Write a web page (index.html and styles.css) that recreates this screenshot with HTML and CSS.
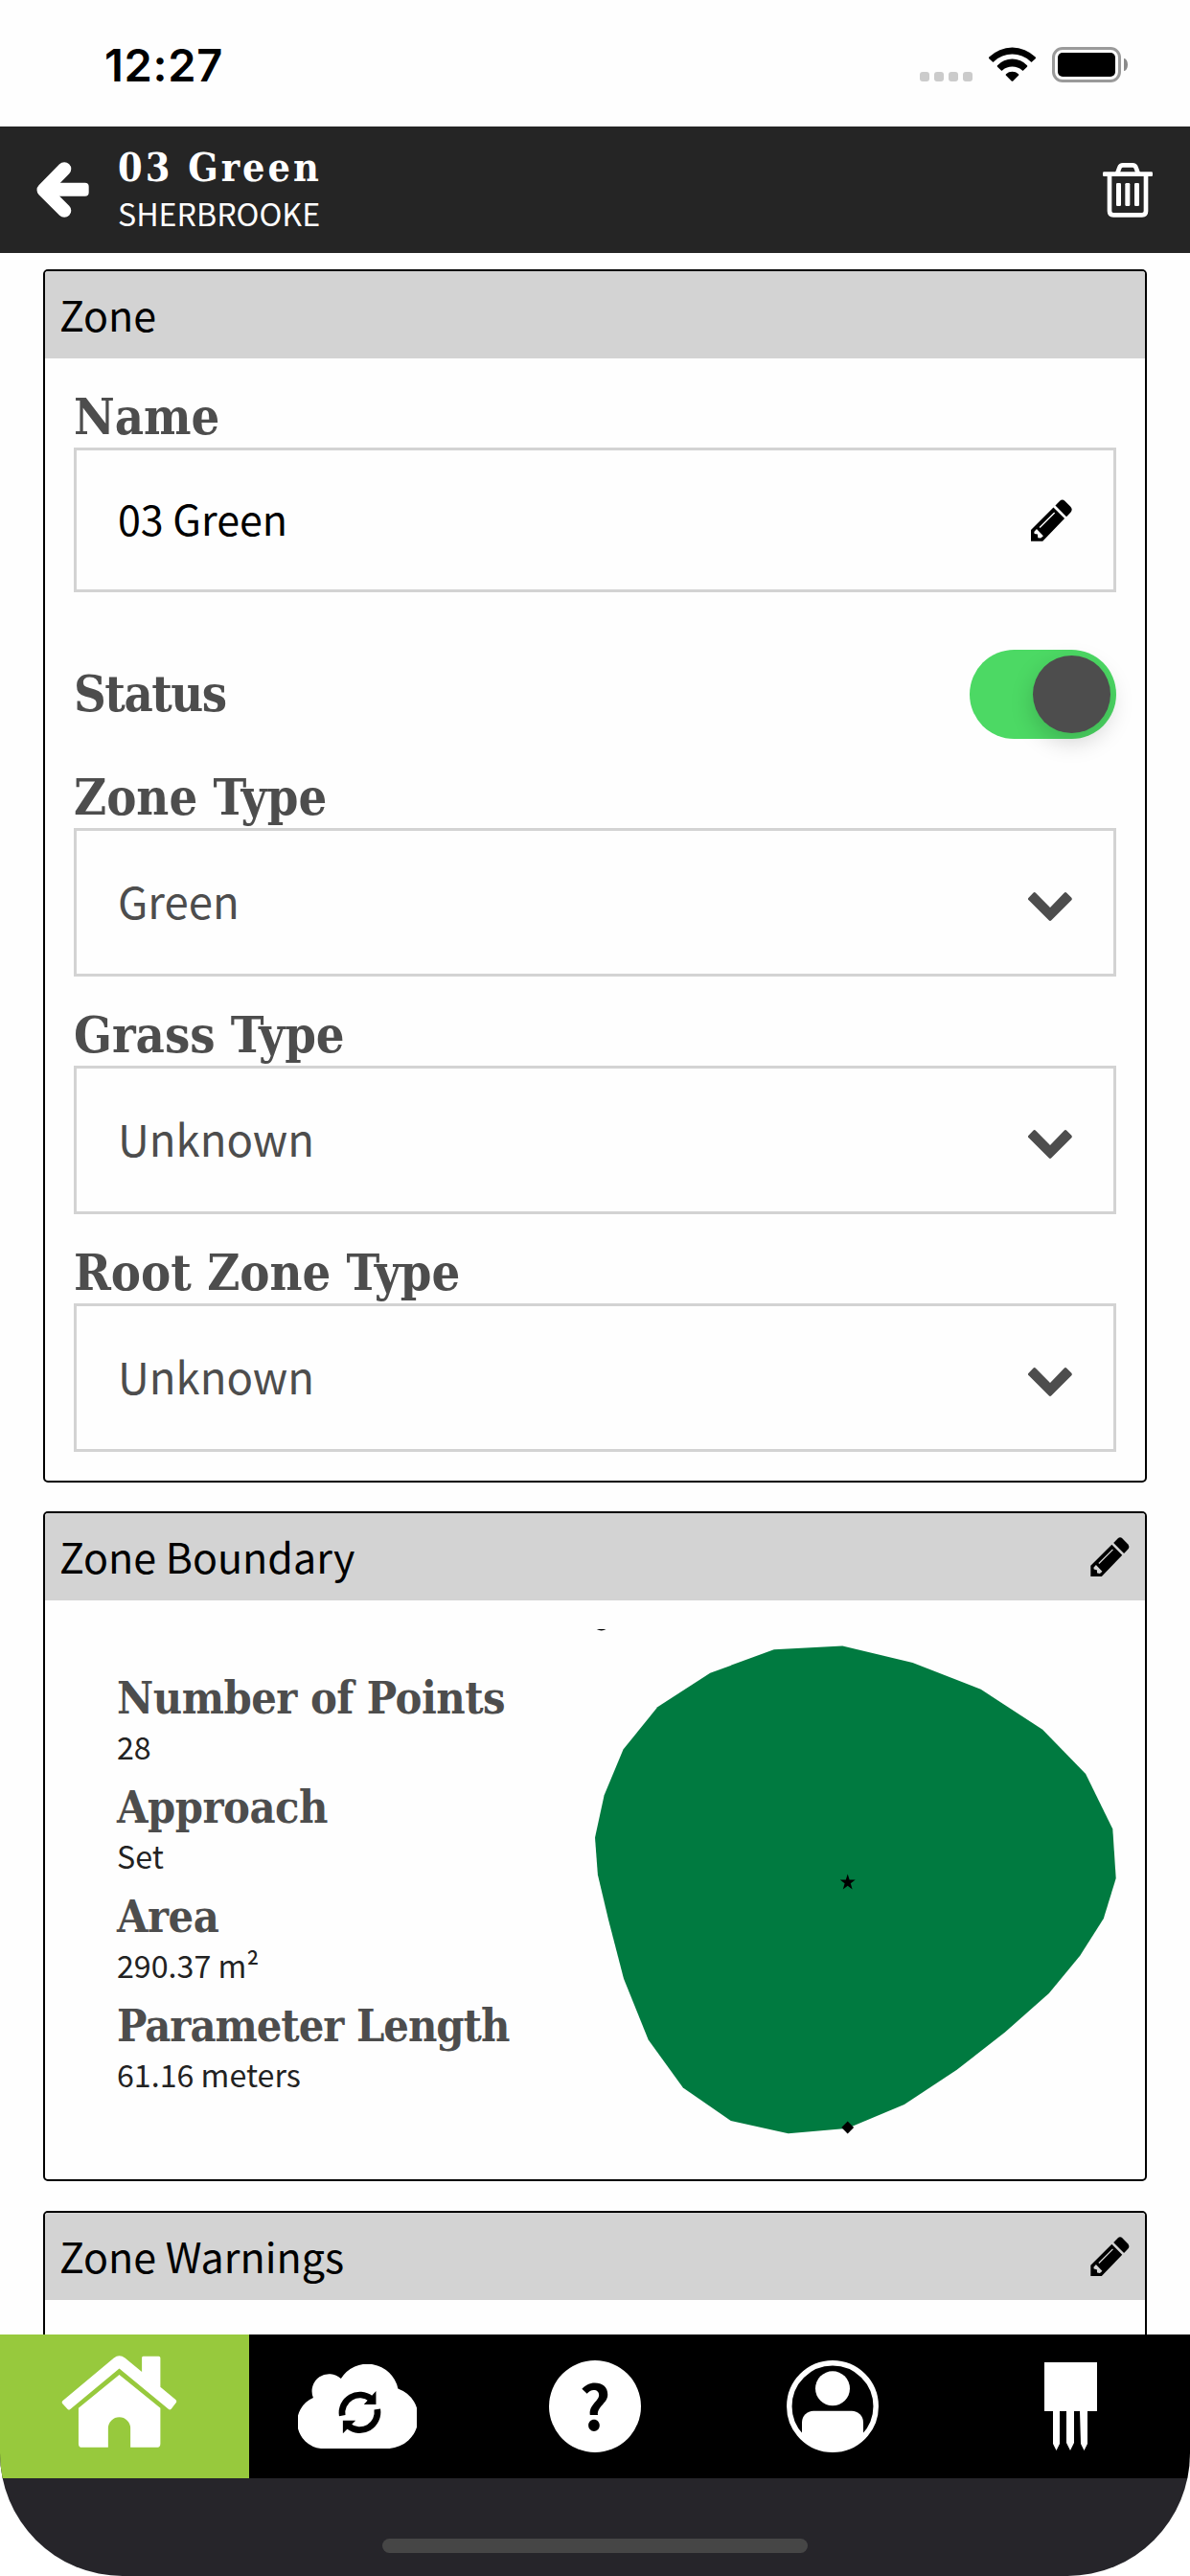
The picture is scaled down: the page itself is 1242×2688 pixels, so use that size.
FILE: index.html
```html
<!DOCTYPE html>
<html lang="en">

<head>
  <meta charset="UTF-8" />
  <meta name="viewport" content="width=device-width, initial-scale=1.0" />
  <title>Zone - 03 Green</title>
  <link rel="stylesheet" href="styles.css">
</head>

<body>
  <!-- shared icons -->
  <svg class="sprite" width="0" height="0">
    <symbol id="pencil" viewBox="528 422 130 132">
      <path fill-rule="evenodd" d="M528 518L599 447L634 482L565 554H528zM538 524L539 530L549 532L550 543L559 544L567 537L546 515zM554 509L557 512L604 465L601 462z" />
      <path d="M605 441L619 427Q627 419 635 427L653 445Q661 454 653 463L640 477z" />
    </symbol>
    <symbol id="chevron" viewBox="515 153 138 90">
      <path d="M516 171L531 155Q535 151 539 155L584 201L628 155Q632 151 636 155L651 170Q654 174 651 178L588 241Q584 245 580 241L517 178Q513 174 516 171z" />
    </symbol>
  </svg>

  <div class="app">
    <div class="status-bar">
      <span class="time">12:27</span>
      <div class="indicators">
        <div class="signal"><i></i><i></i><i></i><i></i></div>
        <svg class="wifi" viewBox="396 148 147 107">
          <path d="M397 184Q395 181 397 179A103 103 0 0 1 542 179Q544 181 542 184L532 193Q529 196 527 193A84 84 0 0 0 412 193Q410 196 407 193z" />
          <path d="M423 210Q421 207 423 205A64 64 0 0 1 516 205Q518 207 516 210L505 220Q502 223 500 220A47 47 0 0 0 439 220Q437 223 434 220z" />
          <path d="M450 237Q448 235 450 232A31 31 0 0 1 489 232Q491 235 489 237L472 254Q469.500 256 467 254z" />
        </svg>
        <div class="battery"><span></span></div>
        <div class="battery-tip"></div>
      </div>
    </div>

    <header class="header">
      <svg class="back" viewBox="115 506 164 175">
        <path d="M202 528L137 594L202 659" />
        <rect x="150" y="572" width="129" height="42" rx="12" />
      </svg>
      <div class="heading">
        <h1>03 Green</h1>
        <p>SHERBROOKE</p>
      </div>
      <svg class="trash" viewBox="753 510 156 171">
        <path d="M798 544L805 525Q808 517 816 517H846Q854 517 857 525L864 544M774 545V661Q774 673 786 673H876Q888 673 888 661V545" />
        <rect x="753" y="538" width="156" height="14" rx="4" />
        <rect x="795" y="573" width="15" height="72" rx="4" />
        <rect x="823" y="573" width="15" height="72" rx="4" />
        <rect x="852" y="573" width="15" height="72" rx="4" />
      </svg>
    </header>

    <main class="content">
      <section class="card">
        <div class="card-header">
          <h2>Zone</h2>
        </div>
        <div class="card-body">
          <div class="label">Name</div>
          <div class="input">
            <span>03 Green</span>
            <svg class="pencil"><use href="#pencil" /></svg>
          </div>
          <div class="status-row">
            <div class="label">Status</div>
            <div class="toggle"><span class="knob"></span></div>
          </div>
          <div class="label">Zone Type</div>
          <div class="select">
            <span>Green</span>
            <svg class="chevron"><use href="#chevron" /></svg>
          </div>
          <div class="label">Grass Type</div>
          <div class="select">
            <span>Unknown</span>
            <svg class="chevron"><use href="#chevron" /></svg>
          </div>
          <div class="label">Root Zone Type</div>
          <div class="select">
            <span>Unknown</span>
            <svg class="chevron"><use href="#chevron" /></svg>
          </div>
        </div>
      </section>

      <section class="card">
        <div class="card-header">
          <h2>Zone Boundary</h2>
          <svg class="pencil"><use href="#pencil" /></svg>
        </div>
        <div class="card-body boundary">
          <dl class="stats">
            <dt>Number of Points</dt>
            <dd>28</dd>
            <dt>Approach</dt>
            <dd>Set</dd>
            <dt>Area</dt>
            <dd>290.37 m²</dd>
            <dt class="tight">Parameter Length</dt>
            <dd>61.16 meters</dd>
          </dl>
          <svg class="shape" viewBox="0 0 544 544">
            <path d="M1.700 0H11.600Q6.700 2.800 1.700 0z" />
            <polygon class="green" points="186.800,21.200 258.300,17.500 331.500,34.900 402.700,62.800 467.100,104.800 512.100,151 540.300,208.600 543.700,260 530.800,302 506.200,340.700 473.800,379.900 428,420.500 377.700,459.700 322.800,496 269.100,518.600 262,521 201.700,526.200 141.800,513 91.900,478.500 55.700,428.500 30,364.800 14.100,303.400 2.900,256.300 0,217.600 9.600,173.200 29.500,125.500 65.300,81.200 120.200,45.800" />
            <path d="M263.700 255.500L265.600 261.500H271.700L266.800 265.300L268.600 271.500L263.700 267.800L258.800 271.500L260.600 265.300L255.700 261.500H261.800z" />
            <path d="M263.700 513.500L270.100 520L263.700 526.500L257.300 520z" />
          </svg>
        </div>
      </section>

      <section class="card">
        <div class="card-header">
          <h2>Zone Warnings</h2>
          <svg class="pencil"><use href="#pencil" /></svg>
        </div>
        <div class="card-body"></div>
      </section>
    </main>

    <nav class="tabs">
      <div class="tab active">
        <svg class="home" viewBox="190 534 364 288">
          <path d="M194 676L355 541Q372 528 390 541L443 585V540Q443 536 448 536H496Q501 536 501 541V632L549 672Q554 677 550 682L535 701Q531 705 527 702L372 574L218 702Q214 705 210 702L194 685Q190 680 194 676z" />
          <path d="M372 594L501 698V810Q501 822 489 822H407V762A35 35 0 0 0 337 762V822H255Q244 822 244 810V698z" />
        </svg>
      </div>
      <div class="tab">
        <svg class="cloud" viewBox="931 561 373 264">
          <path d="M1003 825A83 83 0 0 1 979 666A54 54 0 0 1 1066 606A98 98 0 0 1 1245 637A97 97 0 0 1 1218 825z" />
          <g class="sync">
            <path d="M1070 722A56 56 0 0 1 1160 669M1180 702A56 56 0 0 1 1090 755" />
            <path class="tip" d="M1176 645V687H1138zM1072 778V737H1112z" />
          </g>
        </svg>
      </div>
      <div class="tab">
        <div class="help">?</div>
      </div>
      <div class="tab">
        <svg class="user" viewBox="0 0 96 96">
          <clipPath id="round">
            <circle cx="48" cy="48" r="47" />
          </clipPath>
          <circle class="ring" cx="48" cy="48" r="45.200" />
          <circle cx="48" cy="29.300" r="18" />
          <rect x="16" y="52.700" width="64" height="60" rx="12" clip-path="url(#round)" />
        </svg>
      </div>
      <div class="tab">
        <svg class="probe" viewBox="0 0 55 92">
          <path d="M0 0H55V51H45V85L41.500 92L38 85L37 51H31V84L27 92L23 84V51H16V85L12.500 92L9 85V51H0z" />
        </svg>
      </div>
    </nav>

    <div class="bottom">
      <div class="home-indicator"></div>
    </div>
  </div>
</body>

</html>
```

FILE: styles.css
```css
:root {
  --bar: #252525;
  --gray: #d3d3d3;
  --text: #4d4d4d;
  --accent: #97c93d;
  --sans: "Noto Sans CJK SC", "Noto Sans", sans-serif;
  --slab: "DejaVu Serif Condensed", "DejaVu Serif", serif;
}

* {
  box-sizing: border-box;
}

body {
  margin: 0;
  background: #fff;
  font-family: var(--sans);
}

h1,
h2,
p,
dl,
dd {
  margin: 0;
}

svg {
  display: block;
  flex-shrink: 0;
}

.sprite {
  position: absolute;
}

.app {
  display: flex;
  flex-direction: column;
  width: 1242px;
  height: 2688px;
  overflow: hidden;
  background: #fefefe;
  border-radius: 0 0 128px 128px;
}

/* status bar */
.status-bar {
  display: flex;
  justify-content: space-between;
  height: 132px;
  padding: 39px 65px 0 109px;
  flex-shrink: 0;
}

.time {
  font: 600 47px/58px Inter, sans-serif;
  letter-spacing: 0.700px;
}

.indicators {
  display: flex;
  align-items: flex-end;
  height: 47px;
}

.signal {
  display: flex;
  gap: 5px;
  margin: 0 17px 1px 0;
}

.signal i {
  width: 10px;
  height: 10px;
  border-radius: 3px;
  background: #cbcbcb;
}

.wifi {
  width: 49px;
  height: 36px;
  margin: 0 17px 1px 0;
}

.battery {
  width: 72px;
  height: 37px;
  padding: 3px;
  border: 3px solid #9a9a9a;
  border-radius: 11px;
}

.battery span {
  display: block;
  height: 25px;
  border-radius: 5px;
  background: #000;
}

.battery-tip {
  width: 4px;
  height: 13px;
  margin: 0 0 12px 3px;
  border-radius: 0 4px 4px 0 / 0 7px 7px 0;
  background: #8a8a8a;
}

/* header */
.header {
  display: flex;
  align-items: center;
  height: 132px;
  padding: 0 39px 0 38px;
  flex-shrink: 0;
  background: var(--bar);
  color: #fff;
}

.back {
  width: 55px;
  height: 58px;
  fill: #fff;
}

.back path {
  fill: none;
  stroke: #fff;
  stroke-width: 43;
  stroke-linecap: round;
  stroke-linejoin: round;
}

.heading {
  flex: 1;
  padding-left: 30px;
}

.heading h1 {
  font: bold 41px/48px var(--slab);
  letter-spacing: 3px;
}

.heading p {
  font-size: 32.200px;
  line-height: 46px;
}

.trash {
  width: 52px;
  height: 57px;
  fill: #fff;
}

.trash path {
  fill: none;
  stroke: #fff;
  stroke-width: 14;
}

/* cards */
.content {
  flex: 1;
  min-height: 0;
  padding: 17px 45px 0;
  overflow: hidden;
}

.card {
  border: 2px solid #000;
  border-radius: 5px;
  overflow: hidden;
}

.card + .card {
  margin-top: 30px;
}

.card:last-child {
  height: 300px;
  margin-top: 31px;
}

.card-header {
  display: flex;
  align-items: center;
  justify-content: space-between;
  height: 91px;
  padding: 0 16px 0 15px;
  background: var(--gray);
}

.card-header h2 {
  padding-bottom: 3px;
  font-size: 43px;
  font-weight: normal;
  line-height: 60px;
}

.card-header .pencil {
  width: 41px;
  height: 41px;
}

.card-body {
  padding: 29px 30px 30px;
}

.label {
  height: 64px;
  font: bold 52px/64px var(--slab);
  letter-spacing: 0;
  white-space: nowrap;
  color: var(--text);
}

.input,
.select {
  display: flex;
  align-items: center;
  justify-content: space-between;
  height: 155px;
  padding: 0 43px;
  border: 3px solid var(--gray);
}

.input {
  height: 151px;
  font-size: 43px;
}

.select {
  font-size: 45.500px;
  color: var(--text);
}

.input span,
.select span {
  padding-bottom: 6px;
}

.select + .label {
  margin-top: 29px;
}

.pencil {
  width: 43px;
  height: 44px;
}

.chevron {
  width: 46px;
  height: 30px;
  margin-top: 8px;
  fill: var(--text);
}

.status-row {
  display: flex;
  align-items: center;
  justify-content: space-between;
  height: 93px;
  margin: 60px 0 29px;
}

.status-row .label {
  height: 66px;
  letter-spacing: -1.500px;
}

.toggle {
  display: flex;
  justify-content: flex-end;
  width: 153px;
  height: 93px;
  padding: 6px;
  border-radius: 47px;
  background: #4cd964;
}

.knob {
  width: 81px;
  height: 81px;
  border-radius: 50%;
  background: var(--text);
  box-shadow: 0 9px 24px rgba(0, 0, 0, 0.18);
}

/* boundary */
.boundary {
  display: flex;
  justify-content: space-between;
  padding-top: 30px;
}

.stats {
  padding: 42px 0 0 45px;
}

.stats dt {
  font: bold 46.500px/60px var(--slab);
  letter-spacing: -0.500px;
  white-space: nowrap;
  color: var(--text);
}

.stats .tight {
  letter-spacing: -1px;
}

.stats dd {
  margin-bottom: 14px;
  font-size: 32.200px;
  line-height: 40px;
  color: #222;
}

.shape {
  width: 544px;
  height: 544px;
}

.green {
  fill: #007a40;
}

/* bottom tabs */
.tabs {
  display: flex;
  height: 150px;
  flex-shrink: 0;
  background: #000;
}

.tab {
  display: flex;
  flex: 1;
  align-items: center;
  justify-content: center;
  fill: #fff;
}

.tab.active {
  background: var(--accent);
  box-shadow: 12px 0 0 var(--accent);
}

.home {
  width: 121px;
  height: 96px;
  margin-bottom: 10px;
}

.cloud {
  width: 124px;
  height: 88px;
}

.sync path {
  fill: none;
  stroke: #000;
  stroke-width: 20;
}

.sync .tip {
  fill: #000;
  stroke: none;
}

.help {
  width: 96px;
  height: 96px;
  border-radius: 50%;
  background: #fff;
  font-size: 64px;
  font-weight: bold;
  line-height: 90px;
  text-align: center;
}

.user {
  width: 96px;
  height: 96px;
}

.ring {
  fill: none;
  stroke: #fff;
  stroke-width: 5.500;
}

.probe {
  width: 55px;
  height: 92px;
}

.bottom {
  display: flex;
  justify-content: center;
  height: 102px;
  padding-top: 63px;
  flex-shrink: 0;
  background: #26252a;
}

.home-indicator {
  width: 444px;
  height: 15px;
  border-radius: 8px;
  background: #464646;
}
```
